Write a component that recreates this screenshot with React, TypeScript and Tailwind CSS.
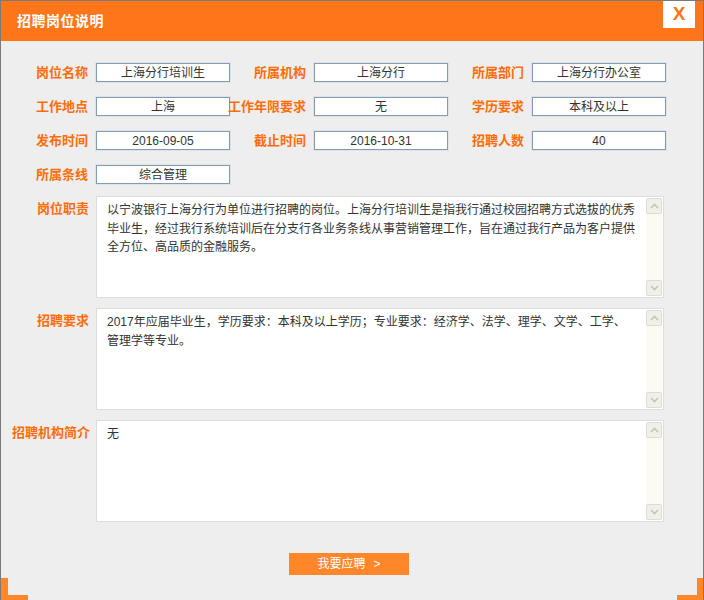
import React from "react";

const FONT = "font-['Liberation_Sans','Noto_Sans_CJK_SC',sans-serif]";

type Field = { label: string; value: string };

const rows: Field[][] = [
  [
    { label: "岗位名称", value: "上海分行培训生" },
    { label: "所属机构", value: "上海分行" },
    { label: "所属部门", value: "上海分行办公室" },
  ],
  [
    { label: "工作地点", value: "上海" },
    { label: "工作年限要求", value: "无" },
    { label: "学历要求", value: "本科及以上" },
  ],
  [
    { label: "发布时间", value: "2016-09-05" },
    { label: "截止时间", value: "2016-10-31" },
    { label: "招聘人数", value: "40" },
  ],
  [{ label: "所属条线", value: "综合管理" }],
];

const blocks: { label: string; lines: string[] }[] = [
  {
    label: "岗位职责",
    lines: [
      "以宁波银行上海分行为单位进行招聘的岗位。上海分行培训生是指我行通过校园招聘方式选拔的优秀",
      "毕业生，经过我行系统培训后在分支行各业务条线从事营销管理工作，旨在通过我行产品为客户提供",
      "全方位、高品质的金融服务。",
    ],
  },
  {
    label: "招聘要求",
    lines: [
      "2017年应届毕业生，学历要求：本科及以上学历；专业要求：经济学、法学、理学、文学、工学、",
      "管理学等专业。",
    ],
  },
  { label: "招聘机构简介", lines: ["无"] },
];

function Chevron({ up }: { up?: boolean }) {
  return (
    <svg width="9" height="6" viewBox="0 0 9 6" className="block">
      <path
        d={up ? "M1 5 L4.5 1.5 L8 5" : "M1 1 L4.5 4.5 L8 1"}
        fill="none"
        stroke="#c4c4bc"
        strokeWidth="1.6"
      />
    </svg>
  );
}

function ScrollBar() {
  return (
    <div className="my-[1px] mr-[1px] flex w-[16px] flex-col bg-[#fbfbf1]">
      <div className="flex h-[16px] items-center justify-center rounded-[2px] border border-[#dcdcd2] bg-[#f0f0e8]">
        <Chevron up />
      </div>
      <div className="flex-1" />
      <div className="flex h-[16px] items-center justify-center rounded-[2px] border border-[#dcdcd2] bg-[#f0f0e8]">
        <Chevron />
      </div>
    </div>
  );
}

export default function App() {
  return (
    <div
      className={`relative flex h-[600px] w-[704px] flex-col overflow-hidden border-x border-t border-[#7a7a7a] bg-[#eeeeee] ${FONT}`}
    >
      <div className="flex h-[40px] shrink-0 items-start justify-between bg-[#ff761a]">
        <div className="pl-[16px] pt-[10px] text-[14px] font-bold leading-[20px] tracking-[0.5px] text-white">
          招聘岗位说明
        </div>
        <div className="mr-[8px] flex h-[27px] w-[32px] items-start justify-center bg-white pt-[2px] text-[19px] font-bold leading-[22px] text-[#ff761a]">
          X
        </div>
      </div>

      <div className="flex flex-col gap-[15px] pl-[11px] pt-[22px]">
        {rows.map((row, i) => (
          <div key={i} className="flex h-[19px] items-center">
            {row.map((f) => (
              <div key={f.label} className="flex items-center">
                <div className="w-[76px] whitespace-nowrap text-right text-[13px] font-bold text-[#ff6d0a] [direction:rtl]">
                  {f.label}
                </div>
                <div className="ml-[8px] flex h-[19px] w-[134px] items-center justify-center border border-[#7f9db9] bg-white text-[12px] text-[#333] shadow-[0_0_0_1px_#e2e2e2]">
                  {f.value}
                </div>
              </div>
            ))}
          </div>
        ))}
      </div>

      <div className="mt-[12px] flex flex-col gap-[10px] pl-[11px]">
        {blocks.map((b) => (
          <div key={b.label} className="flex items-start">
            <div className="w-[77px] whitespace-nowrap pt-[3px] text-right text-[13px] font-bold text-[#ff6d0a]">
              {b.label}
            </div>
            <div className="ml-[7px] flex h-[102px] w-[568px] border border-[#dddddd] bg-white">
              <div className="flex-1 pl-[10px] pt-[4px] text-[12px] leading-[18.5px] text-[#333]">
                {b.lines.map((l, i) => (
                  <div key={i} className="whitespace-nowrap">
                    {l}
                  </div>
                ))}
              </div>
              <ScrollBar />
            </div>
          </div>
        ))}
      </div>

      <div className="mt-[31px] pl-[288px]">
        <button
          type="button"
          className="flex h-[22px] w-[120px] items-center justify-center gap-[8px] bg-[#ff8629] text-[12px] text-white"
        >
          <span>我要应聘</span>
          <span>&gt;</span>
        </button>
      </div>

      <div className="absolute bottom-0 left-0 h-[22px] w-[7px] bg-[#ff8629]" />
      <div className="absolute bottom-0 left-0 h-[5px] w-[27px] bg-[#ff8629]" />
      <div className="absolute bottom-0 right-0 h-[22px] w-[6px] bg-[#ff8629]" />
      <div className="absolute bottom-0 right-0 h-[5px] w-[26px] bg-[#ff8629]" />
    </div>
  );
}
